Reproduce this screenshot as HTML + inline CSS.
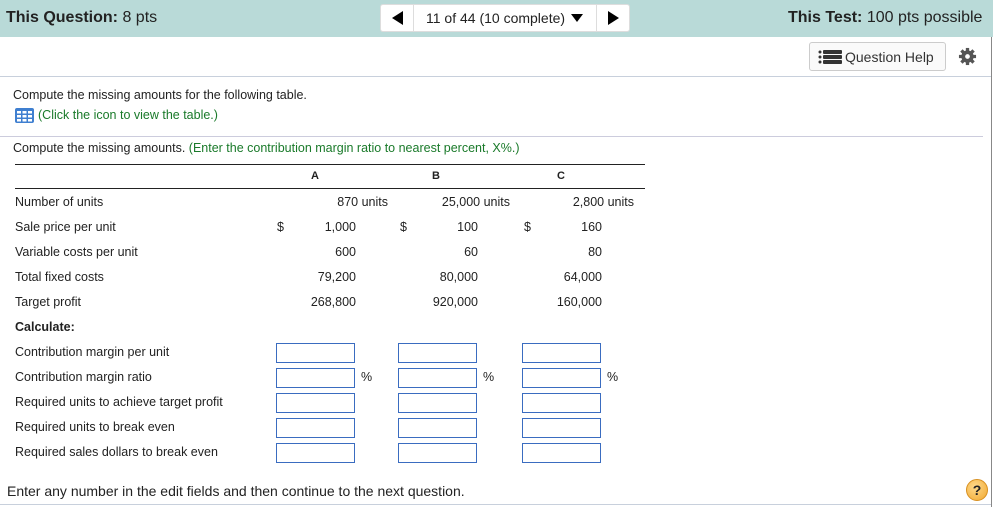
<!DOCTYPE html>
<html><head><style>
body{margin:0;width:993px;height:507px;position:relative;overflow:hidden;font-family:"Liberation Sans",Arial,sans-serif;color:#222;background:#fff}
.a{position:absolute;white-space:nowrap}
.t{font-size:12.5px}
.in{position:absolute;width:77px;height:18px;border:1.5px solid #3a6cc0;background:#fff}
.r{text-align:right}
</style></head><body>
<div class="a" style="left:0;top:0;width:993px;height:37px;background:#b9dad8"></div>
<div class="a" style="left:6px;top:9px;font-size:16px"><b>This Question:</b> 8 pts</div>
<div class="a" style="left:380px;top:4px;width:250px;height:28px;background:#fff;border:1px solid #ddd;border-radius:3px;box-sizing:border-box"></div>
<div class="a" style="left:413px;top:4px;width:1px;height:28px;background:#ddd"></div>
<div class="a" style="left:596px;top:4px;width:1px;height:28px;background:#ddd"></div>
<div class="a" style="left:392px;top:11px;width:0;height:0;border-top:7px solid transparent;border-bottom:7px solid transparent;border-right:11px solid #000"></div>
<div class="a" style="left:608px;top:11px;width:0;height:0;border-top:7px solid transparent;border-bottom:7px solid transparent;border-left:11px solid #000"></div>
<div class="a" style="left:426px;top:10px;font-size:14px">11 of 44 (10 complete)</div>
<div class="a" style="left:571px;top:14px;width:0;height:0;border-left:6px solid transparent;border-right:6px solid transparent;border-top:8px solid #000"></div>
<div class="a" style="left:788px;top:9px;font-size:16px"><b>This Test:</b> 100 pts possible</div>
<div class="a" style="left:809px;top:42px;width:137px;height:29px;border:1px solid #ccc;border-radius:3px;box-sizing:border-box;background:#fafafa"></div>
<svg class="a" style="left:818px;top:50px" width="25" height="14"><g fill="#333"><circle cx="2" cy="2" r="1.5"/><circle cx="2" cy="7" r="1.5"/><circle cx="2" cy="12" r="1.5"/><rect x="5" y="0" width="19" height="4" rx="1"/><rect x="5" y="5" width="19" height="4" rx="1"/><rect x="5" y="10" width="19" height="4" rx="1"/></g></svg>
<div class="a" style="left:845px;top:49px;font-size:14px;color:#333">Question Help</div>
<svg class="a" style="left:958px;top:47px" width="19" height="19" viewBox="0 0 20 20"><g fill="#555"><circle cx="10" cy="10" r="6.5"/><g stroke="#555" stroke-width="3.5"><line x1="10" y1="1" x2="10" y2="19"/><line x1="1" y1="10" x2="19" y2="10"/><line x1="3.6" y1="3.6" x2="16.4" y2="16.4"/><line x1="16.4" y1="3.6" x2="3.6" y2="16.4"/></g></g><circle cx="10" cy="10" r="2.5" fill="#fff"/></svg>
<div class="a" style="left:0;top:76px;width:991px;height:1px;background:#c8d0dc"></div>
<div class="a" style="left:991px;top:37px;width:1px;height:470px;background:#888"></div>
<div class="a t" style="left:13px;top:88px">Compute the missing amounts for the following table.</div>
<svg class="a" style="left:15px;top:108px" width="19" height="15"><rect width="19" height="15" rx="2" fill="#3f7fd0"/><g fill="#fff"><rect x="2" y="3" width="4" height="2.5"/><rect x="7.5" y="3" width="4" height="2.5"/><rect x="13" y="3" width="4" height="2.5"/><rect x="2" y="7" width="4" height="2.5"/><rect x="7.5" y="7" width="4" height="2.5"/><rect x="13" y="7" width="4" height="2.5"/><rect x="2" y="11" width="4" height="2.5"/><rect x="7.5" y="11" width="4" height="2.5"/><rect x="13" y="11" width="4" height="2.5"/></g></svg>
<div class="a t" style="left:38px;top:108px;color:#1a7a2a">(Click the icon to view the table.)</div>
<div class="a" style="left:0;top:136px;width:983px;height:1px;background:#ccd"></div>
<div class="a t" style="left:13px;top:141px">Compute the missing amounts. <span style="color:#1a7a2a">(Enter the contribution margin ratio to nearest percent, X%.)</span></div>
<div class="a" style="left:15px;top:164px;width:630px;height:1px;background:#222"></div>
<div class="a" style="left:15px;top:188px;width:630px;height:1px;background:#222"></div>
<div class="a" style="left:311px;top:170px;font-size:11px;font-weight:bold">A</div>
<div class="a" style="left:432px;top:170px;font-size:11px;font-weight:bold">B</div>
<div class="a" style="left:557px;top:170px;font-size:11px;font-weight:bold">C</div>
<div class="a t" style="left:15px;top:190px;line-height:25px">Number of units<br>Sale price per unit<br>Variable costs per unit<br>Total fixed costs<br>Target profit<br><b>Calculate:</b><br>Contribution margin per unit<br>Contribution margin ratio<br>Required units to achieve target profit<br>Required units to break even<br>Required sales dollars to break even</div>
<div class="a t r" style="left:280px;width:108px;top:190px;line-height:25px">870 units</div>
<div class="a t r" style="left:280px;width:76px;top:215px;line-height:25px">1,000<br>600<br>79,200<br>268,800</div>
<div class="a t r" style="left:400px;width:110px;top:190px;line-height:25px">25,000 units</div>
<div class="a t r" style="left:400px;width:78px;top:215px;line-height:25px">100<br>60<br>80,000<br>920,000</div>
<div class="a t r" style="left:520px;width:114px;top:190px;line-height:25px">2,800 units</div>
<div class="a t r" style="left:520px;width:82px;top:215px;line-height:25px">160<br>80<br>64,000<br>160,000</div>
<div class="a t" style="left:277px;top:215px;line-height:25px">$</div>
<div class="a t" style="left:400px;top:215px;line-height:25px">$</div>
<div class="a t" style="left:524px;top:215px;line-height:25px">$</div>
<div class="in" style="left:276px;top:343px"></div><div class="in" style="left:398px;top:343px"></div><div class="in" style="left:522px;top:343px"></div>
<div class="in" style="left:276px;top:368px"></div><div class="in" style="left:398px;top:368px"></div><div class="in" style="left:522px;top:368px"></div>
<div class="in" style="left:276px;top:393px"></div><div class="in" style="left:398px;top:393px"></div><div class="in" style="left:522px;top:393px"></div>
<div class="in" style="left:276px;top:418px"></div><div class="in" style="left:398px;top:418px"></div><div class="in" style="left:522px;top:418px"></div>
<div class="in" style="left:276px;top:443px"></div><div class="in" style="left:398px;top:443px"></div><div class="in" style="left:522px;top:443px"></div>
<div class="a t" style="left:361px;top:365px;line-height:25px">%</div>
<div class="a t" style="left:483px;top:365px;line-height:25px">%</div>
<div class="a t" style="left:607px;top:365px;line-height:25px">%</div>
<div class="a" style="left:7px;top:483px;font-size:14px">Enter any number in the edit fields and then continue to the next question.</div>
<div class="a" style="left:966px;top:479px;width:20px;height:20px;border-radius:50%;background:radial-gradient(circle at 40% 35%,#ffd98a,#f0a830);border:1px solid #d89020;text-align:center;font-weight:bold;font-size:14px;line-height:20px;color:#222">?</div>
<div class="a" style="left:0;top:504px;width:991px;height:1px;background:#c8d0dc"></div>
</body></html>
